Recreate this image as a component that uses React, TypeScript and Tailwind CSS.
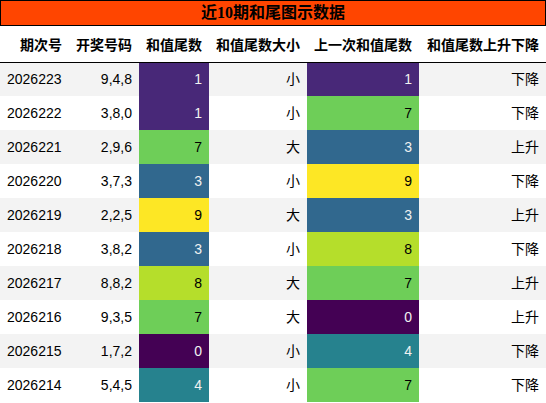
import React from "react";

const COLORS: Record<number, string> = {
  0: "#440154",
  1: "#482878",
  2: "#3e4989",
  3: "#31688e",
  4: "#26828e",
  5: "#1f9e89",
  6: "#35b779",
  7: "#6ece58",
  8: "#b5de2b",
  9: "#fde725",
};

const DARK = new Set([0, 1, 2, 3, 4, 5]);

const rows: [string, string, number, string, number, string][] = [
  ["2026223", "9,4,8", 1, "小", 1, "下降"],
  ["2026222", "3,8,0", 1, "小", 7, "下降"],
  ["2026221", "2,9,6", 7, "大", 3, "上升"],
  ["2026220", "3,7,3", 3, "小", 9, "下降"],
  ["2026219", "2,2,5", 9, "大", 3, "上升"],
  ["2026218", "3,8,2", 3, "小", 8, "下降"],
  ["2026217", "8,8,2", 8, "大", 7, "上升"],
  ["2026216", "9,3,5", 7, "大", 0, "上升"],
  ["2026215", "1,7,2", 0, "小", 4, "下降"],
  ["2026214", "5,4,5", 4, "小", 7, "下降"],
];

const headers = ["期次号", "开奖号码", "和值尾数", "和值尾数大小", "上一次和值尾数", "和值尾数上升下降"];
const widths = ["w-[69px]", "w-[70px]", "w-[70px]", "w-[98px]", "w-[112px]", "w-[127px]"];

function Cell({ v }: { v: number }) {
  return (
    <td
      className="px-[7px] text-right"
      style={{ backgroundColor: COLORS[v], color: DARK.has(v) ? "#f1f1f1" : "#000000" }}
    >
      {v}
    </td>
  );
}

export default function App() {
  return (
    <div className="w-[546px] bg-white font-['Liberation_Sans','Noto_Sans_CJK_SC',sans-serif] text-[14px] text-black">
      <div className="flex h-[26px] items-center justify-center border border-black bg-[#ff4500] font-['Liberation_Serif','Noto_Sans_CJK_SC',serif] text-[16px] font-bold leading-none">
        近10期和尾图示数据
      </div>
      <table className="w-[546px] table-fixed border-collapse">
        <colgroup>
          {widths.map((w, i) => (
            <col key={i} className={w} />
          ))}
        </colgroup>
        <thead>
          <tr className="h-[36px] border-b border-black">
            {headers.map((h) => (
              <th key={h} className="whitespace-nowrap px-[7px] pt-[3px] text-right font-bold">
                {h}
              </th>
            ))}
          </tr>
        </thead>
        <tbody>
          {rows.map((r, i) => (
            <tr key={r[0]} className={i % 2 === 0 ? "h-[34px] bg-[#f3f3f3]" : "h-[34px] bg-white"}>
              <td className="px-[7px] text-left">{r[0]}</td>
              <td className="px-[7px] text-right">{r[1]}</td>
              <Cell v={r[2]} />
              <td className="px-[7px] text-right">{r[3]}</td>
              <Cell v={r[4]} />
              <td className="px-[7px] text-right">{r[5]}</td>
            </tr>
          ))}
        </tbody>
      </table>
    </div>
  );
}
